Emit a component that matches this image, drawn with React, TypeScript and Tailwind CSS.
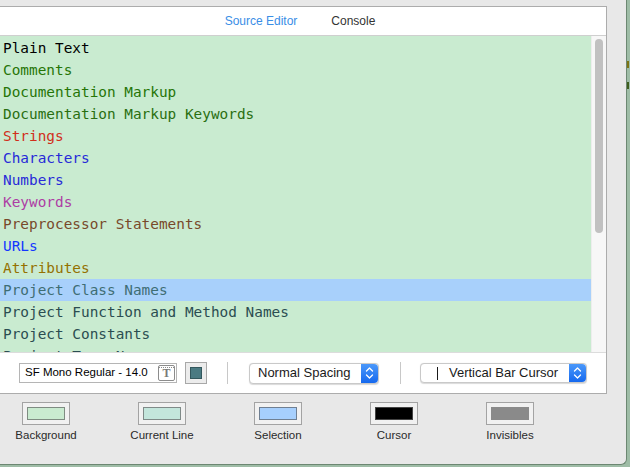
import React from "react";

const rows: { t: string; c: string }[] = [
  { t: "Plain Text", c: "text-[#000000]" },
  { t: "Comments", c: "text-[#267507]" },
  { t: "Documentation Markup", c: "text-[#267507]" },
  { t: "Documentation Markup Keywords", c: "text-[#2a6f10]" },
  { t: "Strings", c: "text-[#d12f1b]" },
  { t: "Characters", c: "text-[#272ad8]" },
  { t: "Numbers", c: "text-[#272ad8]" },
  { t: "Keywords", c: "text-[#ad3da4]" },
  { t: "Preprocessor Statements", c: "text-[#78492a]" },
  { t: "URLs", c: "text-[#1337ff]" },
  { t: "Attributes", c: "text-[#947100]" },
  { t: "Project Class Names", c: "text-[#3e6d74]" },
  { t: "Project Function and Method Names", c: "text-[#2b4d51]" },
  { t: "Project Constants", c: "text-[#2b4d51]" },
  { t: "Project Type Names", c: "text-[#2b4d51]" },
];

const swatches: { label: string; fill: string }[] = [
  { label: "Background", fill: "bg-[#c9ebd0] border-[#7f8c82]" },
  { label: "Current Line", fill: "bg-[#c3e6dc] border-[#7f8a88]" },
  { label: "Selection", fill: "bg-[#a6cffd] border-[#6f7f92]" },
  { label: "Cursor", fill: "bg-[#000000] border-[#444444]" },
  { label: "Invisibles", fill: "bg-[#8a8a8a] border-[#8a8a8a]" },
];

function Stepper() {
  return (
    <div className="w-[17px] h-full rounded-r-[4px] bg-gradient-to-b from-[#4a98fa] to-[#1468ee] flex items-center justify-center">
      <svg width="9" height="14" viewBox="0 0 9 14" fill="none">
        <path d="M1.5 5 L4.5 2 L7.5 5" stroke="white" strokeWidth="1.3" strokeLinecap="round" strokeLinejoin="round" />
        <path d="M1.5 9 L4.5 12 L7.5 9" stroke="white" strokeWidth="1.3" strokeLinecap="round" strokeLinejoin="round" />
      </svg>
    </div>
  );
}

export default function App() {
  const sans = { fontFamily: '"Liberation Sans", Arial, sans-serif' };
  return (
    <div className="w-[630px] h-[467px] bg-[#9ebca6] flex overflow-hidden" style={sans}>
      <div className="w-[627px] h-[465px] shrink-0 bg-[#e8e8e8] border-r border-b border-[#6c8772] rounded-br-[6px] flex flex-col">
        <div className="h-[6px] shrink-0" />
        <div className="w-[607px] shrink-0 bg-white border-t border-r border-b border-[#acacac] flex flex-col">
          <div className="h-[29px] shrink-0 border-b border-[#cfcfcf] flex items-center justify-center gap-[34px] pr-[6px] text-[12px]">
            <span className="text-[#3a8ee6]">Source Editor</span>
            <span className="text-[#333333]">Console</span>
          </div>
          <div className="h-[316px] shrink-0 flex overflow-hidden bg-[#c9ebd0]">
            <div className="w-[591px] pt-[1px] flex flex-col" style={{ fontFamily: '"DejaVu Sans Mono", "Liberation Mono", monospace' }}>
              {rows.map((r, i) => (
                <div
                  key={r.t}
                  className={`h-[22px] shrink-0 leading-[22px] pl-[3px] text-[14.4px] whitespace-nowrap ${r.c} ${i === 11 ? "bg-[#a8d0fb]" : ""}`}
                >
                  {r.t}
                </div>
              ))}
            </div>
            <div className="w-[15px] bg-[#f7f7f7] border-l border-[#ededed] flex justify-center pt-[3px]">
              <div className="w-[8px] h-[194px] rounded-full bg-[#c1c1c1]" />
            </div>
          </div>
          <div className="h-[41px] shrink-0 border-t border-[#dcdcdc] flex items-center">
            <div className="ml-[19px] w-[158px] h-[20px] border border-[#b5b5b5] flex items-center justify-between pl-[5px] pr-[1px]">
              <span className="text-[11.5px] text-black">SF Mono Regular - 14.0</span>
              <div className="w-[17px] h-[16px] rounded-[2px] border-[1.5px] border-[#8c8c8c] flex flex-col items-center">
                <div className="w-full h-[2px] border-b border-dotted border-[#8c8c8c]" />
                <span className="text-[12px] leading-[11px] font-bold text-[#7a7a7a]" style={{ fontFamily: '"Liberation Serif", serif' }}>T</span>
              </div>
            </div>
            <div className="ml-[8px] w-[22px] h-[22px] border border-[#a8a8a8] bg-[#ececec] flex items-center justify-center">
              <div className="w-[12px] h-[12px] bg-[#4a7a82] border border-[#33575d]" />
            </div>
            <div className="ml-[20px] w-px h-[22px] bg-[#c8c8c8]" />
            <div className="ml-[21px] w-[130px] h-[21px] rounded-[4px] bg-white border border-[#c9c9c9] shadow-[0_0.5px_1px_rgba(0,0,0,0.15)] flex items-center justify-between">
              <span className="pl-[8px] text-[13px] text-[#1a1a1a]">Normal Spacing</span>
              <Stepper />
            </div>
            <div className="ml-[21px] w-px h-[22px] bg-[#c8c8c8]" />
            <div className="ml-[19px] w-[167px] h-[20px] rounded-[4px] bg-white border border-[#c9c9c9] shadow-[0_0.5px_1px_rgba(0,0,0,0.15)] flex items-center justify-between">
              <div className="flex items-center">
                <div className="ml-[16px] w-px h-[13px] bg-[#1a1a1a]" />
                <span className="ml-[11px] text-[13px] text-[#1a1a1a]">Vertical Bar Cursor</span>
              </div>
              <Stepper />
            </div>
          </div>
        </div>
        <div className="mt-[8px] flex gap-[24px]">
          {swatches.map((s) => (
            <div key={s.label} className="w-[92px] flex flex-col items-center">
              <div className="w-[48px] h-[23px] border border-[#a3a3a3] bg-[#f1f1f1] flex items-center justify-center">
                <div className={`w-[38px] h-[13px] border ${s.fill}`} />
              </div>
              <span className="mt-[3px] text-[11.5px] leading-[14px] text-[#2a2a2a]">{s.label}</span>
            </div>
          ))}
        </div>
      </div>
      <div className="flex-1 flex flex-col">
        <div className="mt-[61px] w-[2px] h-[7px] bg-[#7d7414]" />
        <div className="mt-[14px] w-[2px] h-[7px] bg-[#3f5e1e]" />
      </div>
    </div>
  );
}
